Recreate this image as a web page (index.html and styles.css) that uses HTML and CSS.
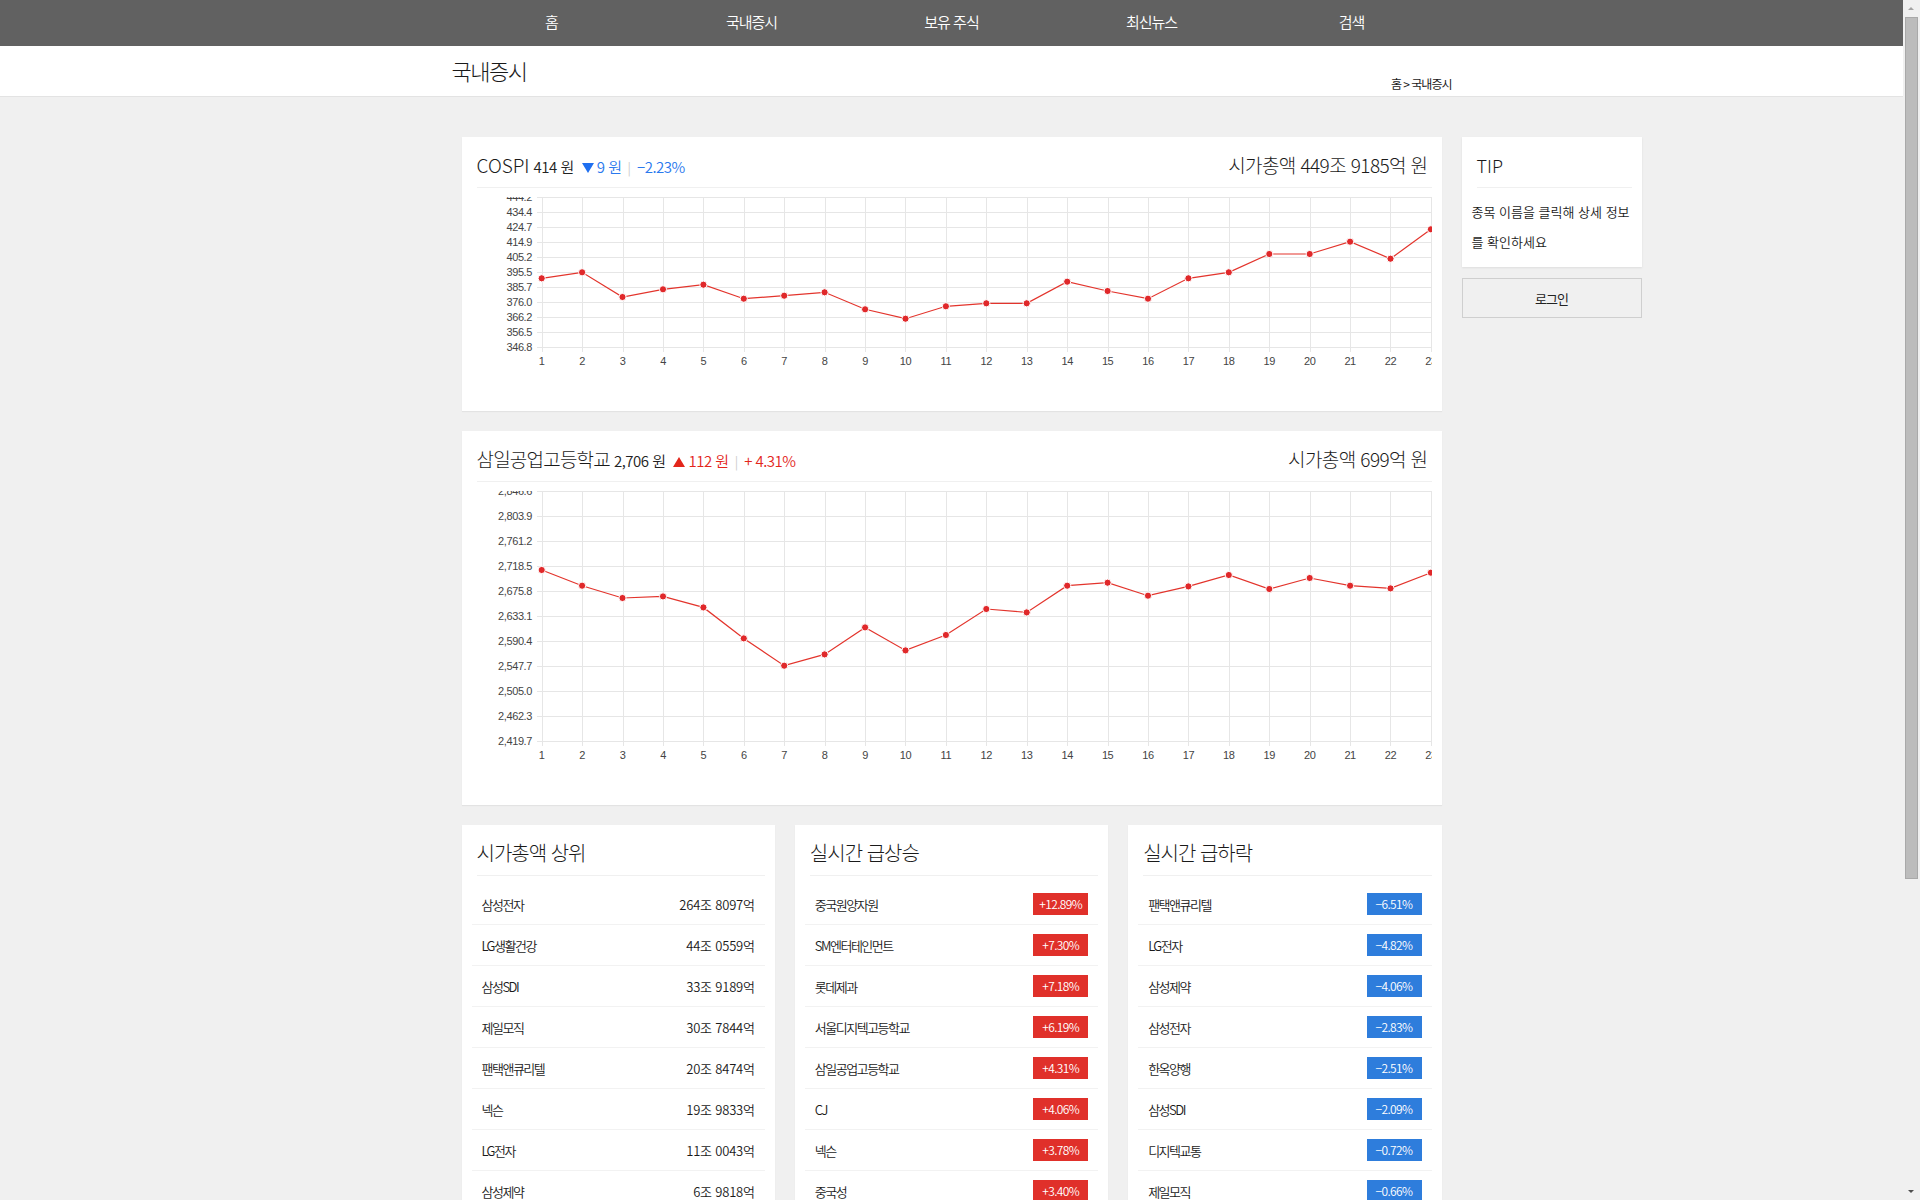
FILE: index.html
```html
<!DOCTYPE html>
<html lang="ko">
<head>
<meta charset="utf-8">
<title>국내증시</title>
<link rel="stylesheet" href="styles.css">
</head>
<body>
<div class="page">
<nav class="gnb">
  <ul class="gnb-list">
    <li>홈</li>
    <li>국내증시</li>
    <li>보유 주식</li>
    <li>최신뉴스</li>
    <li>검색</li>
  </ul>
</nav>
<header class="sub-head">
  <div class="sub-head-inner">
    <h1 class="page-title">국내증시</h1>
    <div class="crumb">홈 &gt; 국내증시</div>
  </div>
</header>
<main class="content">
  <div class="main-col">
    <section class="card">
      <div class="card-head">
        <div class="head-left"><span class="title latin">COSPI</span><span class="price">414 원</span><span class="chg down-c"><svg class="tri" width="12" height="10" viewBox="0 0 12 10"><path d="M0 0H12L6 10Z" fill="#1f6ff0"/></svg>9 원</span><span class="bar">|</span><span class="pct down-c">−2.23%</span></div>
        <div class="cap">시가총액 449조 9185억 원</div>
      </div>
      <svg class="chart" width="955" height="199" viewBox="0 0 955 199">
        <g stroke="#e6e6e6" stroke-width="1" shape-rendering="crispEdges" fill="none">
          <path d="M60 0.5H955M60 15.5H955M60 30.5H955M60 45.5H955M60 60.5H955M60 75.5H955M60 90.5H955M60 105.5H955M60 120.5H955M60 135.5H955M60 150.5H955"/>
          <path d="M65 0V155M105 0V155M146 0V155M186 0V155M226 0V155M267 0V155M307 0V155M348 0V155M388 0V155M428 0V155M469 0V155M509 0V155M550 0V155M590 0V155M631 0V155M671 0V155M711 0V155M752 0V155M792 0V155M833 0V155M873 0V155M913 0V155M954 0V155"/>
        </g>
        <g class="ylab" text-anchor="end">
          <text x="55" y="4">444.2</text><text x="55" y="19">434.4</text><text x="55" y="34">424.7</text><text x="55" y="49">414.9</text><text x="55" y="64">405.2</text><text x="55" y="79">395.5</text><text x="55" y="94">385.7</text><text x="55" y="109">376.0</text><text x="55" y="124">366.2</text><text x="55" y="139">356.5</text><text x="55" y="154">346.8</text>
        </g>
        <g class="xlab" text-anchor="middle">
          <text x="64.7" y="168">1</text><text x="105.1" y="168">2</text><text x="145.5" y="168">3</text><text x="186" y="168">4</text><text x="226.4" y="168">5</text><text x="266.8" y="168">6</text><text x="307.2" y="168">7</text><text x="347.6" y="168">8</text><text x="388.1" y="168">9</text><text x="428.5" y="168">10</text><text x="468.9" y="168">11</text><text x="509.3" y="168">12</text><text x="549.7" y="168">13</text><text x="590.2" y="168">14</text><text x="630.6" y="168">15</text><text x="671" y="168">16</text><text x="711.4" y="168">17</text><text x="751.8" y="168">18</text><text x="792.3" y="168">19</text><text x="832.7" y="168">20</text><text x="873.1" y="168">21</text><text x="913.5" y="168">22</text><text x="953.9" y="168">23</text>
        </g>
        <polyline class="line" points="64.7,81.3 105.1,75.3 145.5,100 186,92.3 226.4,87.7 266.8,101.7 307.2,98.7 347.6,95.3 388.1,112.3 428.5,121.7 468.9,109.3 509.3,106.3 549.7,106.3 590.2,84.7 630.6,94 671,101.7 711.4,81.3 751.8,75.3 792.3,57 832.7,57 873.1,44.7 913.5,61.7 953.9,32.3"/>
        <g class="dots">
          <circle cx="64.7" cy="81.3" r="3.6"/><circle cx="105.1" cy="75.3" r="3.6"/><circle cx="145.5" cy="100" r="3.6"/><circle cx="186" cy="92.3" r="3.6"/><circle cx="226.4" cy="87.7" r="3.6"/><circle cx="266.8" cy="101.7" r="3.6"/><circle cx="307.2" cy="98.7" r="3.6"/><circle cx="347.6" cy="95.3" r="3.6"/><circle cx="388.1" cy="112.3" r="3.6"/><circle cx="428.5" cy="121.7" r="3.6"/><circle cx="468.9" cy="109.3" r="3.6"/><circle cx="509.3" cy="106.3" r="3.6"/><circle cx="549.7" cy="106.3" r="3.6"/><circle cx="590.2" cy="84.7" r="3.6"/><circle cx="630.6" cy="94" r="3.6"/><circle cx="671" cy="101.7" r="3.6"/><circle cx="711.4" cy="81.3" r="3.6"/><circle cx="751.8" cy="75.3" r="3.6"/><circle cx="792.3" cy="57" r="3.6"/><circle cx="832.7" cy="57" r="3.6"/><circle cx="873.1" cy="44.7" r="3.6"/><circle cx="913.5" cy="61.7" r="3.6"/><circle cx="953.9" cy="32.3" r="3.6"/>
        </g>
      </svg>
    </section>

    <section class="card">
      <div class="card-head">
        <div class="head-left"><span class="title">삼일공업고등학교</span><span class="price">2,706 원</span><span class="chg up-c"><svg class="tri" width="12" height="10" viewBox="0 0 12 10"><path d="M0 10H12L6 0Z" fill="#e3261b"/></svg>112 원</span><span class="bar">|</span><span class="pct up-c">+ 4.31%</span></div>
        <div class="cap">시가총액 699억 원</div>
      </div>
      <svg class="chart" width="955" height="299" viewBox="0 0 955 299">
        <g stroke="#e6e6e6" stroke-width="1" shape-rendering="crispEdges" fill="none">
          <path d="M60 0.5H955M60 25.5H955M60 50.5H955M60 75.5H955M60 100.5H955M60 125.5H955M60 150.5H955M60 175.5H955M60 200.5H955M60 225.5H955M60 250.5H955"/>
          <path d="M65 0V255M105 0V255M146 0V255M186 0V255M226 0V255M267 0V255M307 0V255M348 0V255M388 0V255M428 0V255M469 0V255M509 0V255M550 0V255M590 0V255M631 0V255M671 0V255M711 0V255M752 0V255M792 0V255M833 0V255M873 0V255M913 0V255M954 0V255"/>
        </g>
        <g class="ylab" text-anchor="end">
          <text x="55" y="4">2,846.6</text><text x="55" y="29">2,803.9</text><text x="55" y="54">2,761.2</text><text x="55" y="79">2,718.5</text><text x="55" y="104">2,675.8</text><text x="55" y="129">2,633.1</text><text x="55" y="154">2,590.4</text><text x="55" y="179">2,547.7</text><text x="55" y="204">2,505.0</text><text x="55" y="229">2,462.3</text><text x="55" y="254">2,419.7</text>
        </g>
        <g class="xlab" text-anchor="middle">
          <text x="64.7" y="268">1</text><text x="105.1" y="268">2</text><text x="145.5" y="268">3</text><text x="186" y="268">4</text><text x="226.4" y="268">5</text><text x="266.8" y="268">6</text><text x="307.2" y="268">7</text><text x="347.6" y="268">8</text><text x="388.1" y="268">9</text><text x="428.5" y="268">10</text><text x="468.9" y="268">11</text><text x="509.3" y="268">12</text><text x="549.7" y="268">13</text><text x="590.2" y="268">14</text><text x="630.6" y="268">15</text><text x="671" y="268">16</text><text x="711.4" y="268">17</text><text x="751.8" y="268">18</text><text x="792.3" y="268">19</text><text x="832.7" y="268">20</text><text x="873.1" y="268">21</text><text x="913.5" y="268">22</text><text x="953.9" y="268">23</text>
        </g>
        <polyline class="line" points="64.7,79 105.1,94.7 145.5,107 186,105.4 226.4,116.4 266.8,147.4 307.2,174.7 347.6,163.4 388.1,136.4 428.5,159.4 468.9,144 509.3,118 549.7,121.4 590.2,94.7 630.6,91.7 671,104.7 711.4,95.4 751.8,84 792.3,98 832.7,87 873.1,94.7 913.5,97.4 953.9,81.7"/>
        <g class="dots">
          <circle cx="64.7" cy="79" r="3.6"/><circle cx="105.1" cy="94.7" r="3.6"/><circle cx="145.5" cy="107" r="3.6"/><circle cx="186" cy="105.4" r="3.6"/><circle cx="226.4" cy="116.4" r="3.6"/><circle cx="266.8" cy="147.4" r="3.6"/><circle cx="307.2" cy="174.7" r="3.6"/><circle cx="347.6" cy="163.4" r="3.6"/><circle cx="388.1" cy="136.4" r="3.6"/><circle cx="428.5" cy="159.4" r="3.6"/><circle cx="468.9" cy="144" r="3.6"/><circle cx="509.3" cy="118" r="3.6"/><circle cx="549.7" cy="121.4" r="3.6"/><circle cx="590.2" cy="94.7" r="3.6"/><circle cx="630.6" cy="91.7" r="3.6"/><circle cx="671" cy="104.7" r="3.6"/><circle cx="711.4" cy="95.4" r="3.6"/><circle cx="751.8" cy="84" r="3.6"/><circle cx="792.3" cy="98" r="3.6"/><circle cx="832.7" cy="87" r="3.6"/><circle cx="873.1" cy="94.7" r="3.6"/><circle cx="913.5" cy="97.4" r="3.6"/><circle cx="953.9" cy="81.7" r="3.6"/>
        </g>
      </svg>
    </section>

    <div class="row3">
      <section class="card">
        <div class="card-head"><span class="title sub">시가총액 상위</span></div>
        <ul class="rank-list">
          <li><span>삼성전자</span><span class="val">264조 8097억</span></li>
          <li><span>LG생활건강</span><span class="val">44조 0559억</span></li>
          <li><span>삼성SDI</span><span class="val">33조 9189억</span></li>
          <li><span>제일모직</span><span class="val">30조 7844억</span></li>
          <li><span>팬택앤큐리텔</span><span class="val">20조 8474억</span></li>
          <li><span>넥슨</span><span class="val">19조 9833억</span></li>
          <li><span>LG전자</span><span class="val">11조 0043억</span></li>
          <li><span>삼성제약</span><span class="val">6조 9818억</span></li>
          <li><span>CJ</span><span class="val">5조 4127억</span></li>
          <li><span>한옥양행</span><span class="val">3조 2250억</span></li>
        </ul>
      </section>
      <section class="card">
        <div class="card-head"><span class="title sub">실시간 급상승</span></div>
        <ul class="rank-list">
          <li><span>중국원양자원</span><span class="badge up">+12.89%</span></li>
          <li><span>SM엔터테인먼트</span><span class="badge up">+7.30%</span></li>
          <li><span>롯데제과</span><span class="badge up">+7.18%</span></li>
          <li><span>서울디지텍고등학교</span><span class="badge up">+6.19%</span></li>
          <li><span>삼일공업고등학교</span><span class="badge up">+4.31%</span></li>
          <li><span>CJ</span><span class="badge up">+4.06%</span></li>
          <li><span>넥슨</span><span class="badge up">+3.78%</span></li>
          <li><span>중국성</span><span class="badge up">+3.40%</span></li>
          <li><span>LG생활건강</span><span class="badge up">+2.95%</span></li>
          <li><span>한옥양행</span><span class="badge up">+1.87%</span></li>
        </ul>
      </section>
      <section class="card">
        <div class="card-head"><span class="title sub">실시간 급하락</span></div>
        <ul class="rank-list">
          <li><span>팬택앤큐리텔</span><span class="badge down">−6.51%</span></li>
          <li><span>LG전자</span><span class="badge down">−4.82%</span></li>
          <li><span>삼성제약</span><span class="badge down">−4.06%</span></li>
          <li><span>삼성전자</span><span class="badge down">−2.83%</span></li>
          <li><span>한옥양행</span><span class="badge down">−2.51%</span></li>
          <li><span>삼성SDI</span><span class="badge down">−2.09%</span></li>
          <li><span>디지텍교통</span><span class="badge down">−0.72%</span></li>
          <li><span>제일모직</span><span class="badge down">−0.66%</span></li>
          <li><span>롯데제과</span><span class="badge down">−0.41%</span></li>
          <li><span>SM엔터테인먼트</span><span class="badge down">−0.20%</span></li>
        </ul>
      </section>
    </div>
  </div>

  <aside class="side">
    <section class="tip">
      <div class="card-head tip-head"><span class="title tip-title">TIP</span></div>
      <p class="tip-text">종목 이름을 클릭해 상세 정보<br>를 확인하세요</p>
    </section>
    <button class="login" type="button">로그인</button>
  </aside>
</main>
</div>
<div class="fake-scroll" aria-hidden="true">
  <span class="sb-btn sb-up"></span>
  <span class="sb-thumb"></span>
  <span class="sb-fill"></span>
  <span class="sb-btn sb-down"></span>
</div>
</body>
</html>
```

FILE: styles.css
```css
* {
  box-sizing: border-box;
  margin: 0;
  padding: 0;
}

html {
  background: #f0f0f0;
}

body {
  font-family: "Noto Sans CJK KR", "Noto Sans", sans-serif;
  font-weight: 350;
  color: #1a1a1a;
  background: #f0f0f0;
}

.page {
  margin-right: 17px;
  min-height: 1623px;
}

ul {
  list-style: none;
}

/* drawn window scrollbar */
.fake-scroll {
  position: fixed;
  top: 0;
  right: 0;
  width: 17px;
  height: 100vh;
  background: #f0f0f0;
  display: flex;
  flex-direction: column;
  align-items: center;
}
.sb-btn {
  display: block;
  width: 17px;
  height: 17px;
  flex-shrink: 0;
  position: relative;
}
.sb-up::after,
.sb-down::after {
  content: "";
  position: absolute;
  left: 5px;
  width: 0;
  height: 0;
  border-left: 3.5px solid transparent;
  border-right: 3.5px solid transparent;
}
.sb-up::after {
  top: 7px;
  border-bottom: 3.5px solid #a3a3a3;
}
.sb-down::after {
  top: 7px;
  border-top: 3.5px solid #4f4f4f;
}
.sb-thumb {
  display: block;
  width: 13px;
  height: 862px;
  flex-shrink: 0;
  background: #bcbcbc;
  border: 1px solid #a9a9a9;
}
.sb-fill {
  flex: 1;
}

/* top navigation */
.gnb {
  background: #616161;
  height: 46px;
}
.gnb-list {
  width: 1000px;
  margin: 0 auto;
  display: flex;
}
.gnb-list li {
  width: 200px;
  text-align: center;
  line-height: 44px;
  font-size: 15px;
  letter-spacing: -1px;
  color: #fff;
  font-weight: 350;
}

/* sub header */
.sub-head {
  background: #fff;
  height: 51px;
  border-bottom: 1px solid #e3e3e3;
}
.sub-head-inner {
  width: 1000px;
  margin: 0 auto;
  height: 50px;
  display: flex;
  justify-content: space-between;
}
.page-title {
  font-size: 22px;
  line-height: 30px;
  margin-top: 9px;
  letter-spacing: -1.5px;
  font-weight: 300;
  color: #1a1a1a;
}
.crumb {
  align-self: flex-end;
  margin-bottom: 5px;
  font-size: 12px;
  line-height: 14px;
  letter-spacing: -1px;
  color: #1a1a1a;
  font-weight: 400;
}

/* content */
.content {
  width: 1000px;
  margin: 0 auto;
  padding: 40px 0 60px;
  display: flex;
  align-items: flex-start;
}
.main-col {
  width: 980px;
  margin-left: 10px;
  flex-shrink: 0;
  display: flex;
  flex-direction: column;
  gap: 20px;
}
.side {
  width: 180px;
  margin-left: 20px;
  flex-shrink: 0;
}

.card {
  background: #fff;
  padding: 15px 10px 15px 15px;
  box-shadow: 0 1px 1px rgba(0, 0, 0, 0.05);
}
.card-head {
  height: 36px;
  border-bottom: 1px solid #f0f0f0;
  display: flex;
  justify-content: space-between;
  align-items: baseline;
}
.title {
  font-size: 19px;
  line-height: 26px;
  letter-spacing: -0.8px;
  color: #1a1a1a;
  font-weight: 300;
}
.title.latin {
  letter-spacing: 0;
}
.title.sub {
  font-size: 20px;
  letter-spacing: -1px;
}
.head-left {
  line-height: 26px;
  white-space: nowrap;
}
.price {
  font-size: 15px;
  letter-spacing: -0.5px;
  margin-left: 4px;
  color: #222;
}
.chg {
  font-size: 15px;
  letter-spacing: -0.5px;
  margin-left: 8px;
}
.tri {
  margin-right: 3px;
  vertical-align: 0;
}
.bar {
  color: #c8c8c8;
  font-size: 13px;
  margin: 0 6px;
}
.pct {
  font-size: 15px;
  letter-spacing: -0.5px;
}
.down-c {
  color: #2a79ee;
}
.up-c {
  color: #e3261b;
}
.cap {
  font-size: 19px;
  line-height: 26px;
  letter-spacing: -0.6px;
  padding-right: 4px;
  color: #1a1a1a;
  font-weight: 300;
}

.chart {
  display: block;
  margin-top: 9px;
}
.chart .ylab,
.chart .xlab {
  font-family: "Liberation Sans", Arial, sans-serif;
  font-size: 11px;
  fill: #444;
  letter-spacing: -0.4px;
}
.chart .line {
  fill: none;
  stroke: #e3342c;
  stroke-width: 1.2;
}
.chart .dots circle {
  fill: #e0282a;
  stroke: #fff;
  stroke-width: 1;
}

/* bottom lists */
.row3 {
  display: grid;
  grid-template-columns: repeat(3, 1fr);
  gap: 20px;
}
.rank-list {
  margin: 8px 0 0 -5px;
}
.rank-list li {
  height: 41px;
  border-bottom: 1px solid #f2f2f2;
  padding: 0 10px;
  display: flex;
  justify-content: space-between;
  align-items: center;
  font-size: 13px;
  letter-spacing: -1.5px;
  color: #1a1a1a;
}
.val {
  letter-spacing: -0.2px;
}
.badge {
  width: 55px;
  height: 22px;
  line-height: 22px;
  text-align: center;
  color: #fff;
  font-size: 12px;
  letter-spacing: -0.6px;
}
.badge.up {
  background: #e0302a;
}
.badge.down {
  background: #2e7ddc;
}

/* sidebar */
.tip {
  background: #fff;
  padding: 15px 10px 10px 10px;
  box-shadow: 0 1px 2px rgba(0, 0, 0, 0.08);
}
.tip-head {
  margin-left: 5px;
}
.tip-title {
  font-size: 18px;
  letter-spacing: 0;
}
.tip-text {
  margin-top: 9px;
  font-size: 13px;
  line-height: 30px;
  letter-spacing: 0;
  color: #1a1a1a;
}
.login {
  display: block;
  width: 100%;
  height: 40px;
  margin-top: 11px;
  border: 1px solid #cfcfcf;
  background: #f0f0f0;
  font-family: "Noto Sans CJK KR", "Noto Sans", sans-serif;
  font-weight: 400;
  font-size: 13px;
  letter-spacing: -1px;
  color: #222;
}
```
